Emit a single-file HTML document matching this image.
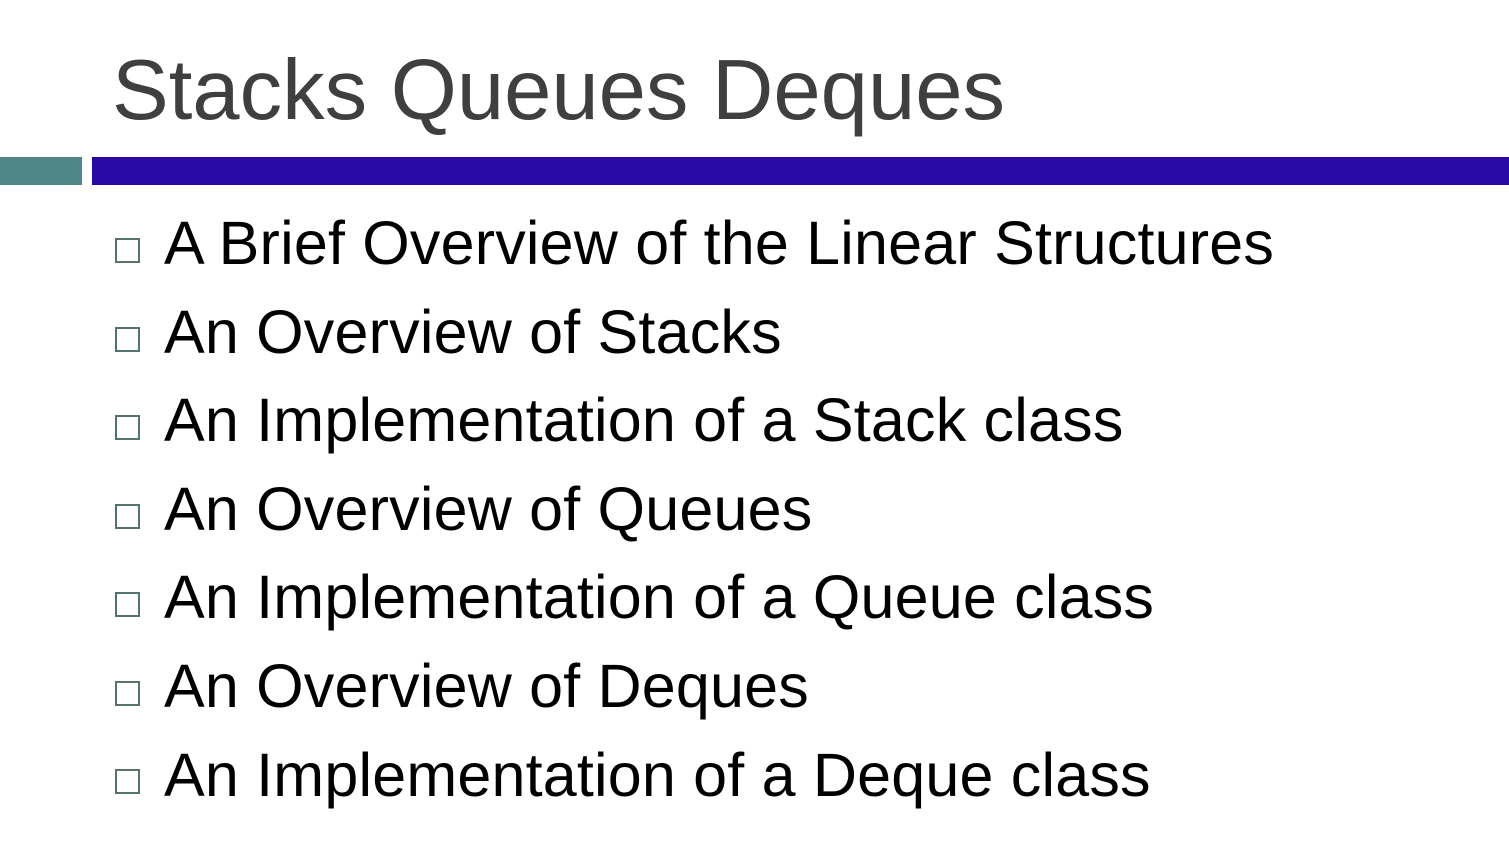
<!DOCTYPE html>
<html><head><style>
body{margin:0;width:1509px;height:846px;background:#fff;position:relative;overflow:hidden;font-family:"Liberation Sans",Arial,sans-serif}
.t{position:absolute;left:112px;top:43px;font-size:85px;line-height:95px;color:#3f3f3f;white-space:nowrap}
.b1{position:absolute;left:0;top:157px;width:82px;height:28px;background:#4f8585}
.b2{position:absolute;left:92px;top:157px;width:1417px;height:28px;background:#2a0aa6}
.r{position:absolute;left:164px;font-size:61px;line-height:70px;color:#000;white-space:nowrap;letter-spacing:0.2px}
.s{position:absolute;left:115px;width:21px;height:21px;border:2px solid #55736f;box-sizing:content-box}
</style></head><body>
<div class="t">Stacks Queues Deques</div>
<div class="b1"></div><div class="b2"></div>
<div class="s" style="top:238px"></div><div class="r" style="top:208px">A Brief Overview of the Linear Structures</div>
<div class="s" style="top:327px"></div><div class="r" style="top:297px">An Overview of Stacks</div>
<div class="s" style="top:415px"></div><div class="r" style="top:385px">An Implementation of a Stack class</div>
<div class="s" style="top:504px"></div><div class="r" style="top:474px">An Overview of Queues</div>
<div class="s" style="top:592px"></div><div class="r" style="top:562px">An Implementation of a Queue class</div>
<div class="s" style="top:681px"></div><div class="r" style="top:651px">An Overview of Deques</div>
<div class="s" style="top:769px"></div><div class="r" style="top:740px">An Implementation of a Deque class</div>
</body></html>
